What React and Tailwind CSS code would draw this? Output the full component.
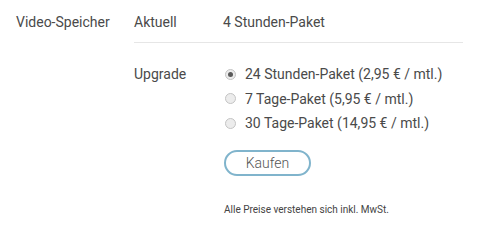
import React from "react";

function Radio({ checked, label }) {
  return (
    <label className="flex items-center h-[24.5px] gap-[9px]">
      <span className="w-[11px] h-[11px] rounded-full border border-[#c4c4c4] bg-[#ececec] flex items-center justify-center shrink-0">
        {checked && <span className="w-[5px] h-[5px] rounded-full bg-[#5a5a5a]" />}
      </span>
      <span>{label}</span>
    </label>
  );
}

export default function App() {
  const options = [
    { id: "24h", label: "24 Stunden-Paket (2,95 € / mtl.)", checked: true },
    { id: "7d", label: "7 Tage-Paket (5,95 € / mtl.)" },
    { id: "30d", label: "30 Tage-Paket (14,95 € / mtl.)" }
  ];

  return (
    <div
      className="flex w-[478px] h-[227px] bg-white text-[14px] text-[#4a4a4a] pl-[16px] pr-[15px]"
      style={{ fontFamily: "Roboto, 'Noto Sans', sans-serif" }}
    >
      <div className="w-[118px] pt-[12px] leading-[20px]">Video-Speicher</div>
      <div className="flex-1">
        {/* current package */}
        <div className="flex pt-[12px] pb-[10px] leading-[20px] border-b border-[#e6e6e6]">
          <div className="w-[89px]">Aktuell</div>
          <div>4 Stunden-Paket</div>
        </div>

        {/* upgrade */}
        <div className="flex mt-[19px] leading-[24px]">
          <div className="w-[89px]">Upgrade</div>
          <div className="pl-[2px]">
            {options.map((o) => (
              <Radio key={o.id} checked={o.checked} label={o.label} />
            ))}
            <button
              type="button"
              className="mt-[14.5px] -ml-[1px] w-[87px] h-[26px] rounded-full border-2 border-[#80b4cc] text-[#555] font-light leading-none"
            >
              Kaufen
            </button>
            <div className="mt-[27px] -ml-[1px] text-[10px] leading-[14px] text-[#444]">
              Alle Preise verstehen sich inkl. MwSt.
            </div>
          </div>
        </div>
      </div>
    </div>
  );
}
